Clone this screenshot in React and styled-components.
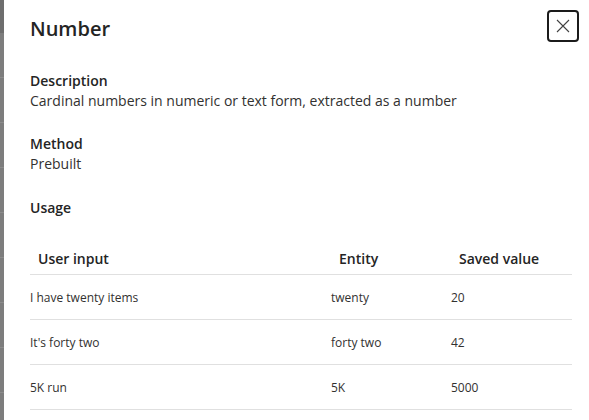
import styled, { createGlobalStyle } from 'styled-components';

const GlobalStyle = createGlobalStyle`
  html, body {
    margin: 0;
    padding: 0;
    background: #ffffff;
  }
  body {
    font-family: 'Segoe UI', 'Open Sans', 'Noto Sans', sans-serif;
    color: #242424;
  }
`;

/* --- page frame with the dimmed strip behind the panel --- */
const Page = styled.div`
  display: flex;
  width: 589px;
  height: 420px;
  overflow: hidden;
`;

const BackStrip = styled.div`
  width: 4px;
  flex-shrink: 0;
  background: repeating-linear-gradient(
      to bottom,
      transparent 0,
      transparent 44px,
      #8c8c8c 44px,
      #8c8c8c 45px
    )
    0 33px / 100% 100% no-repeat,
    linear-gradient(to bottom, #6e6e6e 0, #6e6e6e 33px, #7d7d7d 33px);
`;

const Panel = styled.div`
  flex: 1;
  padding: 10px 10px 0 26px;
  display: flex;
  flex-direction: column;
`;

/* --- header --- */
const Header = styled.div`
  display: flex;
  align-items: flex-start;
  justify-content: space-between;
`;

const Title = styled.h1`
  margin: 5px 0 0;
  font-size: 20px;
  font-weight: 600;
  line-height: 28px;
  color: #242424;
`;

const CloseButton = styled.button`
  width: 32px;
  height: 32px;
  padding: 0;
  display: flex;
  align-items: center;
  justify-content: center;
  background: #ffffff;
  border: 2px solid #1b1b1b;
  border-radius: 4px;
  color: #424242;
  cursor: pointer;
`;

/* --- sections --- */
const Section = styled.section`
  margin-top: ${(p) => p.gap || 0}px;
`;

const Label = styled.div`
  font-size: 14px;
  font-weight: 600;
  line-height: 20px;
  color: #242424;
`;

const Value = styled.div`
  font-size: 14px;
  line-height: 20px;
  color: #323130;
`;

/* --- usage table --- */
const Table = styled.div`
  margin-top: 24px;
  width: 542px;
  display: grid;
  grid-template-columns: 301px 120px 1fr;
`;

const HeadCell = styled.div`
  height: 32px;
  padding-left: 8px;
  display: flex;
  align-items: center;
  font-size: 14px;
  font-weight: 600;
  color: #242424;
  border-bottom: 1px solid #e0e0e0;
`;

const Cell = styled.div`
  height: 44px;
  display: flex;
  align-items: center;
  font-size: 12px;
  color: #323130;
  border-bottom: 1px solid #e0e0e0;
`;

const rows = [
  ['I have twenty items', 'twenty', '20'],
  ["It's forty two", 'forty two', '42'],
  ['5K run', '5K', '5000'],
];

const DismissIcon = () => (
  <svg width="14" height="14" viewBox="0 0 14 14" fill="none">
    <path d="M1 1L13 13M13 1L1 13" stroke="currentColor" strokeWidth="1.1" />
  </svg>
);

export default function App() {
  return (
    <>
      <GlobalStyle />
      <Page>
        <BackStrip />
        <Panel>
          <Header>
            <Title>Number</Title>
            <CloseButton aria-label="Close">
              <DismissIcon />
            </CloseButton>
          </Header>

          <Section gap={28}>
            <Label>Description</Label>
            <Value>Cardinal numbers in numeric or text form, extracted as a number</Value>
          </Section>

          <Section gap={23}>
            <Label>Method</Label>
            <Value>Prebuilt</Value>
          </Section>

          <Section gap={24}>
            <Label>Usage</Label>
          </Section>

          <Table>
            <HeadCell>User input</HeadCell>
            <HeadCell>Entity</HeadCell>
            <HeadCell>Saved value</HeadCell>
            {rows.map((r) =>
              r.map((c, i) => <Cell key={r[0] + i}>{c}</Cell>)
            )}
          </Table>
        </Panel>
      </Page>
    </>
  );
}
